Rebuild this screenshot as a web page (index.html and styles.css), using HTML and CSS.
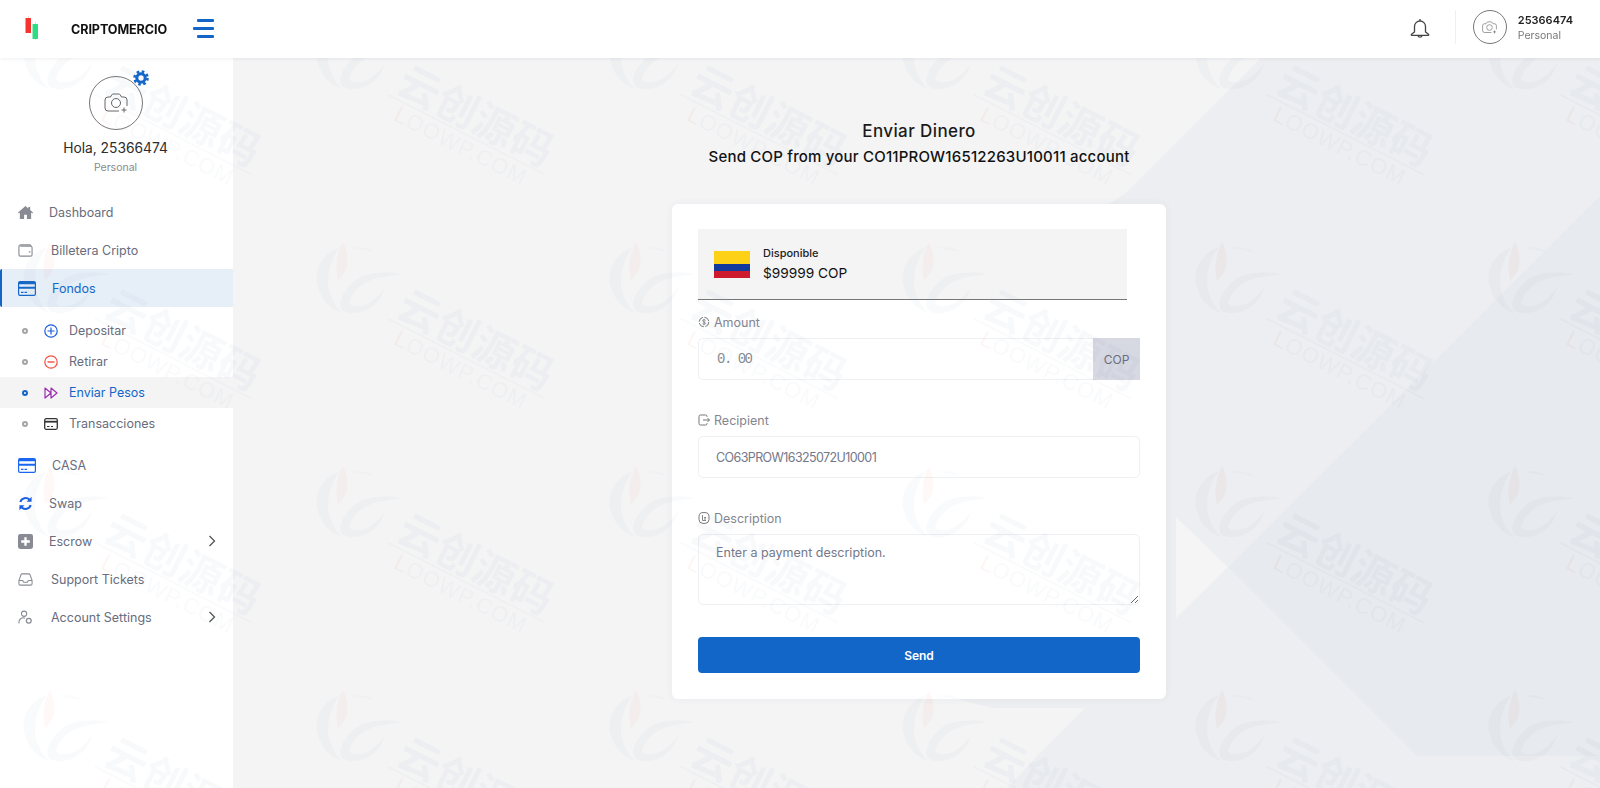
FILE: index.html
```html
<!DOCTYPE html>
<html lang="en">
<head>
    <meta charset="UTF-8">
    <meta name="viewport" content="width=device-width, initial-scale=1.0">
    <title>Criptomercio - Enviar Dinero</title>
    <link rel="stylesheet" href="styles.css">
</head>
<body>
    <svg class="icon-defs" aria-hidden="true">
        <symbol id="camera" viewBox="0 0 24 20">
            <path d="M15 18H4a3 3 0 0 1-3-3V7a3 3 0 0 1 3-3h2.500l1.300-2.200A1.500 1.500 0 0 1 9 1h6a1.500 1.500 0 0 1 1.200.8L17.500 4H20a3 3 0 0 1 3 3v6" fill="none" stroke="currentColor" stroke-width="1"/>
            <circle cx="12" cy="10" r="4.500" fill="none" stroke="currentColor" stroke-width="1"/>
            <path d="M20 14.500v5M17.500 17h5" fill="none" stroke="currentColor" stroke-width="1"/>
        </symbol>
        <symbol id="card" viewBox="0 0 18 15">
            <path d="M2 0h14a2 2 0 0 1 2 2v11a2 2 0 0 1-2 2H2a2 2 0 0 1-2-2V2a2 2 0 0 1 2-2zm-.8 3.200v2.600h15.600V3.200zm0 4.600V13a.8.8 0 0 0 .8.8h14a.8.8 0 0 0 .8-.8V7.800zM3 10.800h2.500V12H3zm3.500 0H9V12H6.500z" fill="currentColor" fill-rule="evenodd"/>
        </symbol>
        <symbol id="chevron" viewBox="0 0 8 12">
            <path d="M1.500 1l5 5-5 5" fill="none" stroke="currentColor" stroke-width="1.300"/>
        </symbol>
    </svg>

    <header class="topbar">
        <div class="brand">
            <svg class="brand-logo" viewBox="0 0 16 24">
                <path d="M3.500 0v17M10.500 6v18" stroke="#f3d9c8" stroke-width="1"/>
                <rect x="0.500" y="2" width="5.500" height="15" rx="0.500" fill="#f8332f"/>
                <rect x="7.500" y="8" width="5.500" height="15" rx="0.500" fill="#2fdc84"/>
            </svg>
            <span class="brand-name">CRIPTOMERCIO</span>
            <div class="burger"><span></span><span></span><span></span></div>
        </div>
        <div class="topbar-right">
            <svg class="bell" viewBox="0 0 22 22">
                <path d="M11 2v1.500M5.500 15V9.500a5.500 5.500 0 0 1 11 0V15l3 2.200a.6.6 0 0 1-.4 1.100H2.900a.6.6 0 0 1-.4-1.100zM8.800 18.500a2.300 2.300 0 0 0 4.400 0" fill="none" stroke="#444" stroke-width="1.300" stroke-linejoin="round"/>
            </svg>
            <div class="topbar-divider"></div>
            <div class="avatar avatar-small"><svg class="avatar-cam"><use href="#camera"/></svg></div>
            <div class="user-box">
                <div class="user-id">25366474</div>
                <div class="user-type">Personal</div>
            </div>
        </div>
    </header>

    <div class="layout">
        <aside class="sidebar">
            <div class="profile">
                <div class="avatar avatar-big">
                    <svg class="avatar-cam"><use href="#camera"/></svg>
                    <svg class="gear" viewBox="0 0 16 16">
                        <circle cx="8" cy="8" r="4.200" fill="none" stroke="#1266c8" stroke-width="3"/>
                        <circle cx="8" cy="8" r="6.500" fill="none" stroke="#1266c8" stroke-width="2.600" stroke-dasharray="2.550 2.550"/>
                    </svg>
                </div>
                <div class="profile-name">Hola, 25366474</div>
                <div class="profile-type">Personal</div>
            </div>

            <nav class="nav">
                <a class="nav-item">
                    <svg class="nav-icon" viewBox="0 0 16 14"><path d="M8 0L0 7l.8 1L2 7v7h4.500V9.500h3V14H14V7l1.200 1 .8-1-3-2.600V1h-2v1.700z" fill="#888b94"/></svg>
                    <span class="nav-text gap-17">Dashboard</span>
                </a>
                <a class="nav-item">
                    <svg class="nav-icon" viewBox="0 0 16 14"><path d="M3 1h9.500A1.500 1.500 0 0 1 14 2.500M2.500 2.500h11A1.500 1.500 0 0 1 15 4v7.500a1.500 1.500 0 0 1-1.500 1.500h-11A1.500 1.500 0 0 1 1 11.500V3a2 2 0 0 1 2-2M11.500 8.500h1.700" fill="none" stroke="#888b94" stroke-width="1.200"/></svg>
                    <span class="nav-text gap-18">Billetera Cripto</span>
                </a>
                <a class="nav-item nav-item-active">
                    <svg class="nav-icon-lg"><use href="#card"/></svg>
                    <span class="nav-text gap-17">Fondos</span>
                </a>
                <div class="subnav">
                    <a class="sub-item">
                        <span class="sub-dot"></span>
                        <svg class="sub-icon" viewBox="0 0 14 14"><circle cx="7" cy="7" r="6.200" fill="none" stroke="#1a5fe0" stroke-width="1.200"/><path d="M7 3.500v7M3.500 7h7" stroke="#1a5fe0" stroke-width="1.200"/></svg>
                        <span>Depositar</span>
                    </a>
                    <a class="sub-item">
                        <span class="sub-dot"></span>
                        <svg class="sub-icon" viewBox="0 0 14 14"><circle cx="7" cy="7" r="6.200" fill="none" stroke="#f44f3f" stroke-width="1.200"/><path d="M3.500 7h7" stroke="#f44f3f" stroke-width="1.400"/></svg>
                        <span>Retirar</span>
                    </a>
                    <a class="sub-item sub-item-active">
                        <span class="sub-dot"></span>
                        <svg class="sub-icon" viewBox="0 0 14 14"><path d="M1 2l6 5-6 5zM7 2l6 5-6 5z" fill="none" stroke="#9c2fb0" stroke-width="1.200" stroke-linejoin="round"/></svg>
                        <span>Enviar Pesos</span>
                    </a>
                    <a class="sub-item">
                        <span class="sub-dot"></span>
                        <svg class="sub-icon" viewBox="0 0 14 14"><rect x="0.700" y="1.700" width="12.600" height="10.600" rx="1.500" fill="none" stroke="#333" stroke-width="1.300"/><path d="M1 4.700h12" stroke="#333" stroke-width="1.800"/><path d="M3 9.500h2.500M7 9.500h2" stroke="#333" stroke-width="1.200"/></svg>
                        <span>Transacciones</span>
                    </a>
                </div>
                <a class="nav-item">
                    <svg class="nav-icon-lg nav-icon-blue"><use href="#card"/></svg>
                    <span class="nav-text gap-17">CASA</span>
                </a>
                <a class="nav-item">
                    <svg class="nav-icon" viewBox="0 0 16 16"><path d="M2.500 6.500A5.800 5.800 0 0 1 12.300 4M13.500 9.500A5.800 5.800 0 0 1 3.700 12" fill="none" stroke="#1a5fe0" stroke-width="2.200"/><path d="M14.500 0.800v5.400H9.100zM1.500 15.200V9.800h5.400z" fill="#1a5fe0"/></svg>
                    <span class="nav-text gap-15">Swap</span>
                </a>
                <a class="nav-item">
                    <svg class="nav-icon" viewBox="0 0 14 14"><path d="M2 0h10a2 2 0 0 1 2 2v10a2 2 0 0 1-2 2H2a2 2 0 0 1-2-2V2a2 2 0 0 1 2-2zm3.900 3v2.900H3v2.200h2.900V11h2.200V8.100H11V5.900H8.100V3z" fill="#888b94" fill-rule="evenodd"/></svg>
                    <span class="nav-text gap-15">Escrow</span>
                    <svg class="nav-chevron"><use href="#chevron"/></svg>
                </a>
                <a class="nav-item">
                    <svg class="nav-icon" viewBox="0 0 16 14"><path d="M1 8l2.300-6.300A1 1 0 0 1 4.200 1h7.600a1 1 0 0 1 .9.700L15 8v3.500a1.500 1.500 0 0 1-1.500 1.500h-11A1.500 1.500 0 0 1 1 11.500zM1 8h4l1 2h4l1-2h4" fill="none" stroke="#888b94" stroke-width="1.100" stroke-linejoin="round"/></svg>
                    <span class="nav-text gap-18">Support Tickets</span>
                </a>
                <a class="nav-item">
                    <svg class="nav-icon" viewBox="0 0 16 15"><circle cx="6.500" cy="3.500" r="2.800" fill="none" stroke="#888b94" stroke-width="1.100"/><path d="M1 14v-1.500A4.500 4.500 0 0 1 7.500 8.300" fill="none" stroke="#888b94" stroke-width="1.100"/><circle cx="11.500" cy="11" r="2.600" fill="none" stroke="#888b94" stroke-width="1.300"/></svg>
                    <span class="nav-text gap-18">Account Settings</span>
                    <svg class="nav-chevron"><use href="#chevron"/></svg>
                </a>
            </nav>
        </aside>

        <main class="content">
            <svg class="content-bg" viewBox="233 58 1367 730" preserveAspectRatio="none" aria-hidden="true">
                <polygon points="1261,58 1600,58 1600,788 1007,788 1040,753 992,708 960,700 960,300 1126,193 1227,92" fill="#eceef1"/>
                <polygon points="1176,517 1228,567 1176,618" fill="#f5f5f6"/>
                <polygon points="992,708 1085,708 1040,753" fill="#f4f4f5"/>
                <polygon points="1600,196 1228,567 1417,756 1600,756" fill="#e7eaee"/>
            </svg>

            <h1 class="page-title">Enviar Dinero</h1>
            <p class="page-sub">Send COP from your CO11PROW16512263U10011 account</p>

            <form class="send-card">
                <div class="balance">
                    <div class="flag"><span class="flag-y"></span><span class="flag-b"></span><span class="flag-r"></span></div>
                    <div>
                        <div class="balance-label">Disponible</div>
                        <div class="balance-value">$99999 COP</div>
                    </div>
                </div>

                <label class="field-label label-amount">
                    <svg class="label-icon" viewBox="0 0 12 12"><circle cx="6" cy="6" r="4.800" fill="none" stroke="#777" stroke-width="1" stroke-dasharray="6 1.500"/><path d="M7.500 4.300C7 3.500 4.700 3.500 4.700 4.800S7.500 6 7.500 7.300 5 8.500 4.500 7.700M6 2.800v6.400" fill="none" stroke="#777" stroke-width="0.800"/></svg>
                    Amount
                </label>
                <div class="amount-group">
                    <input class="amount-input" type="text" placeholder="0. 00">
                    <span class="amount-addon">COP</span>
                </div>

                <label class="field-label label-recipient">
                    <svg class="label-icon" viewBox="0 0 12 12"><path d="M9 3V2.500A1.500 1.500 0 0 0 7.500 1h-5A1.500 1.500 0 0 0 1 2.500v7A1.500 1.500 0 0 0 2.500 11h5A1.500 1.500 0 0 0 9 9.500V9M5 6h6.500M9.500 4l2 2-2 2" fill="none" stroke="#777" stroke-width="1"/></svg>
                    Recipient
                </label>
                <input class="text-input" type="text" value="CO63PROW16325072U10001">

                <label class="field-label label-desc">
                    <svg class="label-icon" viewBox="0 0 12 12"><rect x="1" y="0.600" width="10" height="10.800" rx="4" fill="none" stroke="#777" stroke-width="1"/><path d="M4.500 3v5.500h3.500M6 5.500h2M6 7h2" fill="none" stroke="#777" stroke-width="0.900"/></svg>
                    Description
                </label>
                <textarea class="text-area" placeholder="Enter a payment description."></textarea>

                <button class="send-btn" type="button">Send</button>
            </form>
        </main>
    </div>

    <!-- site watermark, repeats across the whole page -->
    <svg class="watermark" aria-hidden="true">
        <defs>
            <pattern id="wm" width="293" height="224" patternUnits="userSpaceOnUse">
                <path d="M47 23C28 30 20 48 25 63c3 12 12 22 24 26-9-9-14-20-14-32 0-13 5-25 12-34z" fill="#8796b4" opacity="0.05"/>
                <path d="M50 18c5 9 6 22 2 30l-7 9c-3-13-1-29 5-39z" fill="#e0492f" opacity="0.04"/>
                <path d="M58 24c9-2 18 0 24 4l-6-1c-6-2-12-2-18-3z" fill="#8796b4" opacity="0.04"/>
                <path d="M109 50C90 47 70 48 59 59 48 70 45 80 49 86c6 5 18 4 28-2 8-5 13-13 15-21-5 8-12 15-21 18-7 2-13 2-15-2 2-9 10-18 20-22 11-5 22-5 33-7z" fill="#8796b4" opacity="0.05"/>
                <g transform="rotate(27 182 118)">
                    <text x="182" y="131" text-anchor="middle" class="wm-cn">云创源码</text>
                    <rect x="94" y="136" width="176" height="1.500" fill="#8796b4" opacity="0.05"/>
                    <text x="182" y="157" text-anchor="middle" class="wm-en"><tspan class="wm-en-red">L</tspan>OOWP.COM</text>
                </g>
            </pattern>
        </defs>
        <rect width="100%" height="100%" fill="url(#wm)"/>
    </svg>
</body>
</html>
```

FILE: styles.css
```css
* {
    box-sizing: border-box;
}
body {
    margin: 0;
    height: 100vh;
    overflow: hidden;
    display: flex;
    flex-direction: column;
    background: #f4f4f5;
    color: #222;
    font-family: Inter, "Noto Sans", sans-serif;
}
.icon-defs {
    display: none;
}

/* top bar */
.topbar {
    height: 58px;
    flex: none;
    display: flex;
    justify-content: space-between;
    align-items: center;
    background: white;
    box-shadow: 0 1px 3px rgba(60, 70, 90, 0.08);
    position: relative;
    z-index: 1;
}
.brand {
    display: flex;
    align-items: center;
    padding-left: 25px;
}
.brand-logo {
    width: 16px;
    height: 24px;
    margin-top: -2px;
}
.brand-name {
    margin-left: 30px;
    width: 122px;
    font-size: 12.600px;
    font-weight: 700;
    color: #111;
    letter-spacing: -0.1px;
}
.burger {
    width: 21px;
    display: flex;
    flex-direction: column;
    align-items: flex-end;
    gap: 5px;
    margin-top: -2px;
}
.burger span {
    display: block;
    width: 17px;
    height: 3px;
    background: #1266c8;
    border-radius: 1px;
}
.burger span:nth-child(2) {
    width: 21px;
}
.topbar-right {
    display: flex;
    align-items: center;
    padding-right: 27px;
}
.bell {
    width: 22px;
    height: 22px;
    margin-top: -2px;
}
.topbar-divider {
    width: 1px;
    height: 34px;
    background: #f0f0f2;
    margin: -4px 17px 0 24px;
}
.avatar {
    border-radius: 50%;
    border: 1px solid #777;
    display: flex;
    align-items: center;
    justify-content: center;
    position: relative;
    color: #666;
}
.avatar-small {
    width: 34px;
    height: 34px;
    margin-top: -4px;
}
.avatar-small .avatar-cam {
    width: 15px;
    height: 13px;
}
.user-box {
    margin-left: 11px;
    margin-top: -2px;
}
.user-id {
    font-size: 11px;
    font-weight: 600;
    color: #222;
    line-height: 16px;
}
.user-type {
    font-size: 10.500px;
    color: #777;
    line-height: 16px;
}

/* sidebar */
.layout {
    flex: 1;
    display: flex;
    min-height: 0;
}
.sidebar {
    width: 233px;
    flex: none;
    background: white;
}
.profile {
    display: flex;
    flex-direction: column;
    align-items: center;
    padding: 18px 2px 0 0;
    height: 135px;
}
.avatar-big {
    width: 54px;
    height: 54px;
}
.avatar-big .avatar-cam {
    width: 24px;
    height: 20px;
}
.gear {
    position: absolute;
    top: -7px;
    right: -7px;
    width: 16px;
    height: 16px;
}
.profile-name {
    margin-top: 9px;
    font-size: 13.800px;
    line-height: 18px;
    color: #2c2c2c;
}
.profile-type {
    margin-top: 4px;
    font-size: 10.500px;
    line-height: 14px;
    color: #8a8a8a;
}
.nav-item {
    height: 38px;
    display: flex;
    align-items: center;
    padding-left: 18px;
    font-size: 12.500px;
    color: #686c7d;
    position: relative;
}
.nav-item-active {
    background: #e6eef8;
    color: #1266c8;
    border-left: 2px solid #1266c8;
    border-radius: 2px 0 0 2px;
    padding-left: 16px;
}
.nav-icon {
    width: 15px;
    height: 15px;
    flex: none;
}
.nav-icon-lg {
    width: 18px;
    height: 15px;
    flex: none;
    color: #1266c8;
}
.nav-icon-blue {
    color: #1a66f0;
}
.gap-15 {
    margin-left: 16px;
}
.gap-17 {
    margin-left: 16px;
}
.gap-18 {
    margin-left: 18px;
}
.nav-chevron {
    position: absolute;
    right: 17px;
    top: 13px;
    width: 8px;
    height: 12px;
    color: #555;
}
.subnav {
    padding: 8px 0 7px;
}
.sub-item {
    height: 31px;
    display: flex;
    align-items: center;
    padding-left: 22px;
    font-size: 12.500px;
    color: #686c7d;
}
.sub-dot {
    width: 6px;
    height: 6px;
    border-radius: 50%;
    border: 2px solid #a5a5a8;
    margin-right: 16px;
}
.sub-icon {
    width: 14px;
    height: 14px;
    margin-right: 11px;
}
.sub-item-active {
    background: #f4f4f5;
    color: #1266c8;
}
.sub-item-active .sub-dot {
    border-color: #1266c8;
}

/* main column */
.content {
    flex: 1;
    position: relative;
    display: flex;
    flex-direction: column;
    align-items: center;
    padding: 63px 0 0 5px;
}
.content-bg {
    position: absolute;
    left: 0;
    top: 0;
    width: 100%;
    height: 100%;
}
.page-title {
    position: relative;
    margin: 0;
    font-size: 17px;
    line-height: 20px;
    font-weight: 500;
    letter-spacing: 0.4px;
    color: #1b1b1b;
}
.page-sub {
    position: relative;
    margin: 6px 0 0;
    font-size: 15px;
    line-height: 20px;
    font-weight: 500;
    letter-spacing: 0.2px;
    color: #111;
}
.send-card {
    position: relative;
    width: 494px;
    height: 495px;
    margin-top: 37px;
    padding: 25px 26px;
    background: white;
    border-radius: 6px;
    box-shadow: 0 0 8px rgba(70, 80, 100, 0.06);
}
.balance {
    width: 429px;
    height: 71px;
    display: flex;
    align-items: center;
    padding-left: 16px;
    background: #f4f4f5;
    border-bottom: 1px solid #777;
}
.flag {
    width: 36px;
    height: 27px;
    display: flex;
    flex-direction: column;
    margin-right: 13px;
}
.flag-y {
    height: 13px;
    background: #fdd116;
}
.flag-b {
    height: 7px;
    background: #123a9c;
}
.flag-r {
    height: 7px;
    background: #cd1a2c;
}
.balance-label {
    font-size: 11px;
    line-height: 16px;
    font-weight: 500;
    color: #222;
}
.balance-value {
    margin-top: 2px;
    font-size: 13.700px;
    line-height: 20px;
    color: #111;
}
.field-label {
    display: flex;
    align-items: center;
    gap: 4px;
    height: 16px;
    font-size: 12.500px;
    color: #84858f;
}
.label-icon {
    width: 12px;
    height: 12px;
}
.label-amount {
    margin-top: 14px;
}
.label-recipient {
    margin-top: 32px;
}
.label-desc {
    margin-top: 32px;
}
.amount-group {
    display: flex;
    height: 42px;
    margin-top: 8px;
}
.amount-input,
.text-input,
.text-area {
    display: block;
    outline: none;
    border: 1px solid #eef0f3;
    background: transparent;
    color: #747888;
    font-family: inherit;
    font-size: 12.500px;
}
.amount-input {
    flex: 1;
    min-width: 0;
    padding: 0 18px;
    border-right: none;
    border-radius: 5px 0 0 5px;
    font-family: "Liberation Mono", monospace;
    font-size: 14px;
    letter-spacing: -1.500px;
}
.amount-input::placeholder {
    color: #858b94;
}
.amount-addon {
    width: 47px;
    display: flex;
    align-items: center;
    justify-content: center;
    background: #d6d8e2;
    font-size: 12px;
    color: #686c7d;
}
.text-input {
    width: 100%;
    height: 42px;
    margin-top: 8px;
    padding: 0 17px;
    border-radius: 5px;
    letter-spacing: -0.600px;
}
.text-area {
    width: 100%;
    height: 71px;
    margin-top: 8px;
    padding: 10px 17px;
    border-radius: 5px;
}
.text-area::placeholder {
    color: #747888;
}
.send-btn {
    display: block;
    width: 100%;
    height: 36px;
    margin-top: 32px;
    background: #1266c8;
    color: white;
    border: none;
    border-radius: 4px;
    font-family: inherit;
    font-size: 12px;
    font-weight: 600;
}

/* watermark sits over everything */
.watermark {
    position: fixed;
    left: 0;
    top: 0;
    width: 100%;
    height: 100%;
    pointer-events: none;
}
.wm-cn {
    font-family: "Noto Sans CJK SC", sans-serif;
    font-size: 42px;
    font-weight: 700;
    fill: #8796b4;
    fill-opacity: 0.06;
}
.wm-en {
    font-family: "Liberation Sans", sans-serif;
    font-size: 22px;
    letter-spacing: 1px;
    fill: #8796b4;
    fill-opacity: 0.05;
}
.wm-en-red {
    fill: #e0492f;
}
```
